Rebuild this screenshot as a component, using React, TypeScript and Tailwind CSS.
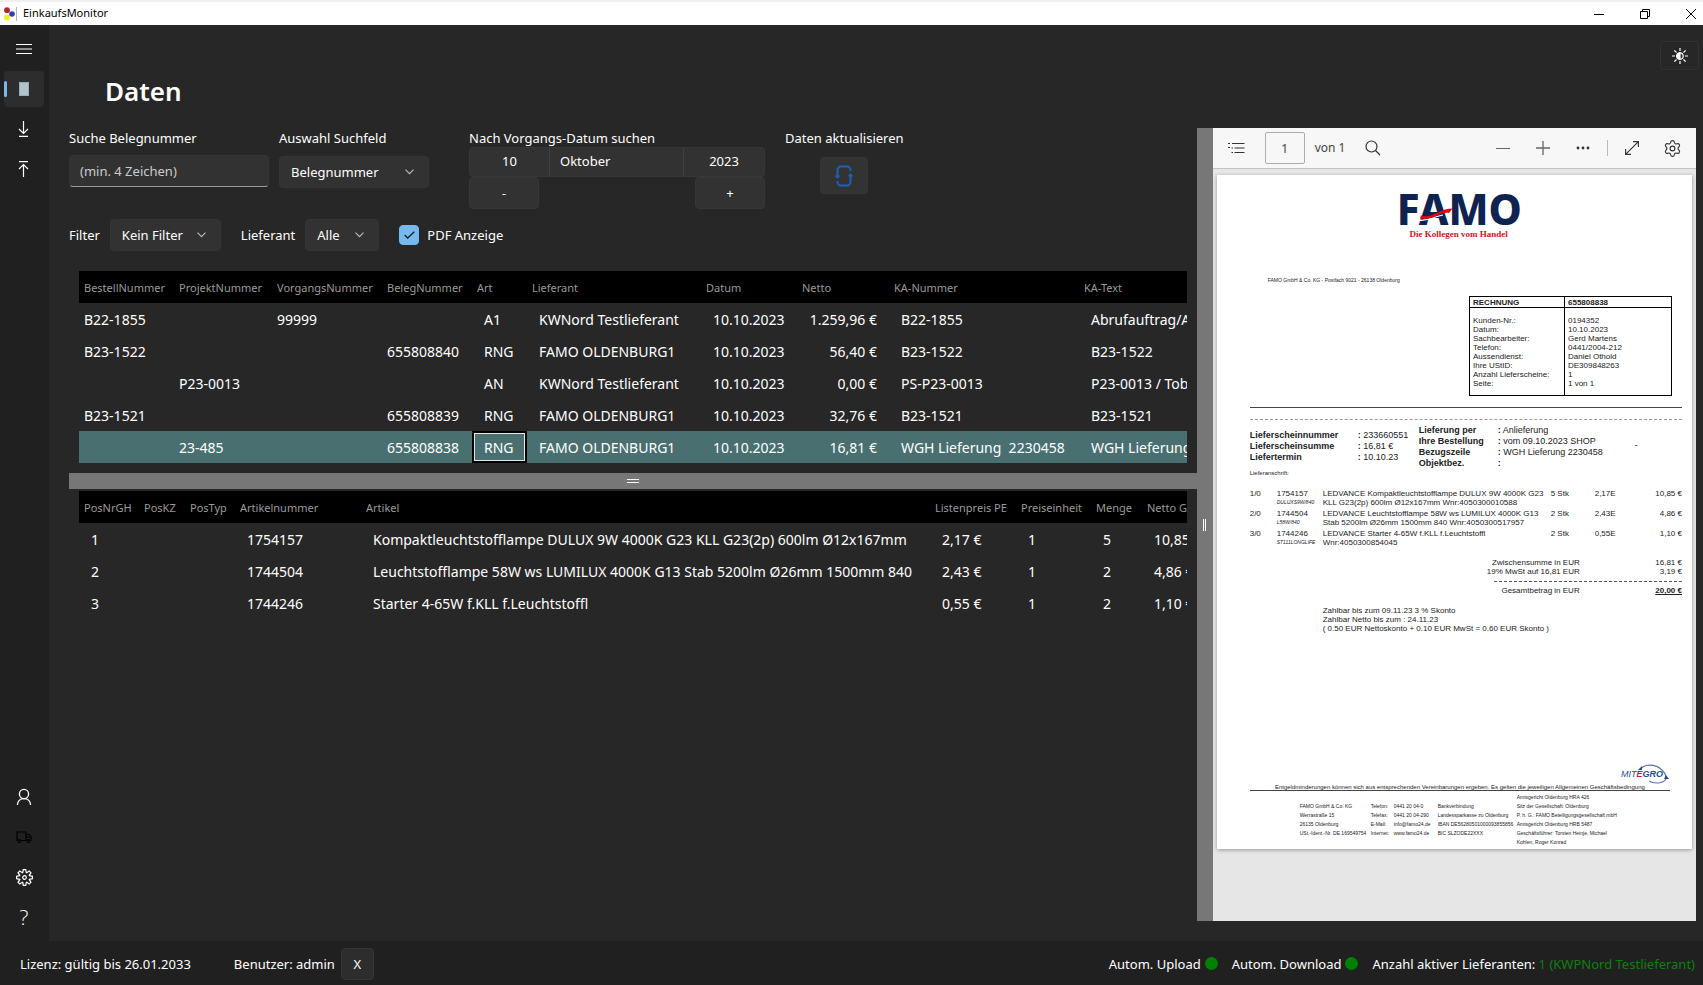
import React, { useState } from 'react';
import { Settings } from 'lucide-react';
import { VscSettingsGear } from 'react-icons/vsc';

interface Order {
  bestell: string;
  projekt: string;
  vorgang: string;
  beleg: string;
  art: string;
  lieferant: string;
  datum: string;
  netto: string;
  kaNummer: string;
  kaText: string;
}

interface Position {
  nr: string;
  artikelnummer: string;
  artikel: string;
  preis: string;
  einheit: string;
  menge: string;
  netto: string;
}

const orders: Order[] = [
  { bestell: 'B22-1855', projekt: '', vorgang: '99999', beleg: '', art: 'A1', lieferant: 'KWNord Testlieferant', datum: '10.10.2023', netto: '1.259,96 €', kaNummer: 'B22-1855', kaText: 'Abrufauftrag/A' },
  { bestell: 'B23-1522', projekt: '', vorgang: '', beleg: '655808840', art: 'RNG', lieferant: 'FAMO OLDENBURG1', datum: '10.10.2023', netto: '56,40 €', kaNummer: 'B23-1522', kaText: 'B23-1522' },
  { bestell: '', projekt: 'P23-0013', vorgang: '', beleg: '', art: 'AN', lieferant: 'KWNord Testlieferant', datum: '10.10.2023', netto: '0,00 €', kaNummer: 'PS-P23-0013', kaText: 'P23-0013 / Tob' },
  { bestell: 'B23-1521', projekt: '', vorgang: '', beleg: '655808839', art: 'RNG', lieferant: 'FAMO OLDENBURG1', datum: '10.10.2023', netto: '32,76 €', kaNummer: 'B23-1521', kaText: 'B23-1521' },
  { bestell: '', projekt: '23-485', vorgang: '', beleg: '655808838', art: 'RNG', lieferant: 'FAMO OLDENBURG1', datum: '10.10.2023', netto: '16,81 €', kaNummer: 'WGH Lieferung  2230458', kaText: 'WGH Lieferung' },
];

const positions: Position[] = [
  { nr: '1', artikelnummer: '1754157', artikel: 'Kompaktleuchtstofflampe DULUX 9W 4000K G23 KLL G23(2p) 600lm Ø12x167mm', preis: '2,17 €', einheit: '1', menge: '5', netto: '10,85 €' },
  { nr: '2', artikelnummer: '1744504', artikel: 'Leuchtstofflampe 58W ws LUMILUX 4000K G13 Stab 5200lm Ø26mm 1500mm 840', preis: '2,43 €', einheit: '1', menge: '2', netto: '4,86 €' },
  { nr: '3', artikelnummer: '1744246', artikel: 'Starter 4-65W f.KLL f.Leuchtstoffl', preis: '0,55 €', einheit: '1', menge: '2', netto: '1,10 €' },
];

const invoiceHead = [
  ['Kunden-Nr.:', '0194352'],
  ['Datum:', '10.10.2023'],
  ['Sachbearbeiter:', 'Gerd Martens'],
  ['Telefon:', '0441/2004-212'],
  ['Aussendienst:', 'Daniel Othold'],
  ['Ihre UStID:', 'DE309848263'],
  ['Anzahl Lieferscheine:', '1'],
  ['Seite:', '1 von 1'],
];

const invoiceLines = [
  { pos: '1/0', nr: '1754157', code: 'DULUXS9W/840', text: ['LEDVANCE Kompaktleuchtstofflampe DULUX 9W 4000K G23', 'KLL G23(2p) 600lm Ø12x167mm Wnr:4050300010588'], qty: '5 Stk', price: '2,17E', sum: '10,85 €' },
  { pos: '2/0', nr: '1744504', code: 'L58W/840', text: ['LEDVANCE Leuchtstofflampe 58W ws LUMILUX 4000K G13', 'Stab 5200lm Ø26mm 1500mm 840 Wnr:4050300517957'], qty: '2 Stk', price: '2,43E', sum: '4,86 €' },
  { pos: '3/0', nr: '1744246', code: 'ST111LONGLIFE', text: ['LEDVANCE Starter 4-65W f.KLL f.Leuchtstoffl', 'Wnr:4050300854045'], qty: '2 Stk', price: '0,55E', sum: '1,10 €' },
];

const imprint = [
  ['', '', '', '', 'Amtsgericht Oldenburg HRA 426'],
  ['FAMO GmbH & Co. KG', 'Telefon:', '0441 20 04-0', 'Bankverbindung', 'Sitz der Gesellschaft: Oldenburg'],
  ['Werrastraße 15', 'Telefax:', '0441 20 04-290', 'Landessparkasse zu Oldenburg', 'P. h. G.: FAMO Beteiligungsgesellschaft mbH'],
  ['26135 Oldenburg', 'E-Mail:', 'info@famo24.de', 'IBAN DE56280501000093855856', 'Amtsgericht Oldenburg HRB 5487'],
  ['USt.-Ident.-Nr. DE 169549754', 'Internet:', 'www.famo24.de', 'BIC SLZODE22XXX', 'Geschäftsführer: Torsten Heinje, Michael'],
  ['', '', '', '', 'Kohlen, Roger Konrad'],
];

function TitleBar() {
  return (
    <header className="flex h-[25px] shrink-0 items-center justify-between border-t-2 border-[#f0f0f0] bg-white text-black">
      <div className="flex items-center gap-[6px] pl-1">
        <svg width="13" height="14" viewBox="0 0 13 14">
          <circle cx="3" cy="3.2" r="2.9" fill="#b3262c" />
          <circle cx="3" cy="10.6" r="3" fill="#eef02a" />
          <circle cx="8" cy="7" r="2.8" fill="#2b3fb0" />
          <path d="M12.5 0v14" stroke="#a9b4d0" />
        </svg>
        <span className="pb-px text-[11px]">EinkaufsMonitor</span>
      </div>
      <div className="flex gap-[22px]">
        <button aria-label="Minimieren" className="flex h-6 w-6 items-center justify-center">
          <svg width="10" height="10" viewBox="0 0 10 10"><path d="M0 5.5h10" stroke="#000" /></svg>
        </button>
        <button aria-label="Verkleinern" className="flex h-6 w-6 items-center justify-center">
          <svg width="10" height="10" viewBox="0 0 10 10" fill="none" stroke="#000"><path d="M.5 2.5h7v7h-7zM2.5 2.5v-2h7v7h-2" /></svg>
        </button>
        <button aria-label="Schließen" className="flex h-6 w-6 items-center justify-center">
          <svg width="10" height="10" viewBox="0 0 10 10" stroke="#000"><path d="M0 0l10 10M10 0L0 10" /></svg>
        </button>
      </div>
    </header>
  );
}

function NavItem({ label, active, children }: { label: string; active?: boolean; children: React.ReactNode }) {
  return (
    <button
      aria-label={label}
      className={`relative flex h-9 w-10 items-center justify-center rounded-[4px] ${active ? 'bg-[#2d2d2d]' : 'hover:bg-[#2d2d2d]'}`}
    >
      {active && <span className="absolute left-0 h-4 w-[3px] rounded-full bg-[#76b9ed]" />}
      {children}
    </button>
  );
}

function Sidebar() {
  return (
    <nav className="flex w-[49px] shrink-0 flex-col justify-between bg-[#202020] px-1 py-[6px]">
      <div className="flex flex-col gap-1">
        <NavItem label="Menü">
          <svg width="16" height="12" viewBox="0 0 16 12" stroke="#fff"><path d="M0 1.5h16M0 6h16M0 10.5h16" /></svg>
        </NavItem>
        <NavItem label="Daten" active>
          <svg width="10" height="14" viewBox="0 0 10 14"><rect x=".5" y=".5" width="9" height="13" fill="#b4c3ca" stroke="#8fb0c0" /></svg>
        </NavItem>
        <NavItem label="Download">
          <svg width="12" height="16" viewBox="0 0 12 16" fill="none" stroke="#fff" strokeWidth="1.2"><path d="M5.5 0v12.5M1 8l4.5 4.5L10 8M1 15.4h9" /></svg>
        </NavItem>
        <NavItem label="Upload">
          <svg width="12" height="16" viewBox="0 0 12 16" fill="none" stroke="#fff" strokeWidth="1.2"><path d="M5.5 16V3.5M1 8l4.5-4.5L10 8M1 .6h9" /></svg>
        </NavItem>
      </div>
      <div className="flex flex-col gap-1">
        <NavItem label="Benutzer">
          <svg width="16" height="18" viewBox="0 0 16 18" fill="none" stroke="#fff" strokeWidth="1.3"><circle cx="8" cy="6" r="4.6" /><path d="M1.4 17c.2-4 3-6.4 6.6-6.4s6.4 2.4 6.6 6.4" /></svg>
        </NavItem>
        <NavItem label="Lieferanten">
          <svg width="16" height="12" viewBox="0 0 16 12" fill="none" stroke="#000" strokeWidth="1.2"><path d="M2 9.5H1V1h9v8.5H5M10 3.5h3.5L15 6v3.5h-1M10 9.5h1M10 6h5" /><circle cx="3.5" cy="10" r="1.4" /><circle cx="12.5" cy="10" r="1.4" /></svg>
        </NavItem>
        <NavItem label="Einstellungen">
          <VscSettingsGear size={17} color="#fff" />
        </NavItem>
        <NavItem label="Hilfe">
          <span className="font-['Open_Sans',sans-serif] text-[21px] font-light leading-6 text-white">?</span>
        </NavItem>
      </div>
    </nav>
  );
}

function Dropdown({ id, value, width }: { id: string; value: string; width: string }) {
  return (
    <div className={`relative flex h-8 items-center ${width}`}>
      <select
        id={id}
        className="h-full w-full appearance-none rounded-[4px] border border-[#353535] bg-[#323232] pl-[11px] text-[13px] text-white outline-none"
      >
        <option>{value}</option>
      </select>
      <svg className="pointer-events-none absolute right-[15px]" width="9" height="6" viewBox="0 0 9 6" fill="none" stroke="#bbb" strokeWidth="1.1"><path d="M.5.7l4 4 4-4" /></svg>
    </div>
  );
}

function SearchBar() {
  const label = 'pt-px leading-[18px]';
  const button = 'h-8 w-[70px] rounded-[4px] border border-[#373737] bg-[#323232] text-[13px]';
  return (
    <div className="flex items-start">
      <div className="mr-[10px] flex w-[200px] flex-col gap-2">
        <label htmlFor="suche" className={label}>Suche Belegnummer</label>
        <input
          id="suche"
          type="text"
          placeholder="(min. 4 Zeichen)"
          className="h-8 w-full rounded-[4px] border border-[#353535] border-b-[#9a9a9a] bg-[#323232] px-[10px] text-[13px] outline-none placeholder:text-[#cccccc]"
        />
      </div>
      <div className="mr-10 flex w-[150px] flex-col gap-[9px]">
        <label htmlFor="suchfeld" className={label}>Auswahl Suchfeld</label>
        <Dropdown id="suchfeld" value="Belegnummer" width="w-[150px]" />
      </div>
      <div className="mr-5 w-[296px]">
        <div id="datum" className={label}>Nach Vorgangs-Datum suchen</div>
        <div role="group" aria-labelledby="datum" className="flex h-[30px] rounded-[4px] border border-[#373737] bg-[#323232]">
          <button className="w-[80px] border-r border-[#404040] pb-[2px]">10</button>
          <button className="flex-1 border-r border-[#404040] pb-[2px] pl-[10px] text-left">Oktober</button>
          <button className="w-[80px] pb-[2px]">2023</button>
        </div>
        <div className="flex justify-between">
          <button className={button}>-</button>
          <button className={button}>+</button>
        </div>
      </div>
      <div className="flex flex-col items-center gap-[10px]">
        <span id="aktualisieren" className={label}>Daten aktualisieren</span>
        <button aria-labelledby="aktualisieren" className="flex h-[37px] w-12 items-center justify-center rounded-[4px] border border-[#353535] bg-[#333333]">
          <svg width="20" height="22" viewBox="0 0 20 22" fill="none" stroke="#1b62b5" strokeWidth="2">
            <path d="M16.5 6V5A3.500 3.500 0 0 0 13 1.500H7A3.500 3.500 0 0 0 3.500 5v7" />
            <path d="M3.500 16v1A3.500 3.500 0 0 0 7 20.500h6a3.500 3.500 0 0 0 3.500-3.500v-7" />
            <path d="M.5 10.500h6l-3 3.500zM13.500 11.500h6l-3-3.500z" fill="#1b62b5" stroke="none" />
          </svg>
        </button>
      </div>
    </div>
  );
}

function FilterBar() {
  const [showPdf, setShowPdf] = useState(true);
  return (
    <div className="mt-[10px] flex items-center">
      <label htmlFor="filter" className="mr-[10px]">Filter</label>
      <Dropdown id="filter" value="Kein Filter" width="w-[111px]" />
      <label htmlFor="lieferant" className="ml-5 mr-[10px]">Lieferant</label>
      <Dropdown id="lieferant" value="Alle" width="w-[74px]" />
      <label className="relative ml-5 flex items-center gap-2">
        <input
          type="checkbox"
          checked={showPdf}
          onChange={(e) => setShowPdf(e.target.checked)}
          className="peer h-5 w-5 appearance-none rounded-[4px] border border-[#76b9ed] checked:bg-[#76b9ed]"
        />
        <svg className="pointer-events-none absolute left-[5px] hidden peer-checked:block" width="11" height="8" viewBox="0 0 11 8" fill="none" stroke="#10202c" strokeWidth="1.3"><path d="M.7 4l3 3L10.3.7" /></svg>
        PDF Anzeige
      </label>
    </div>
  );
}

const tableClass = 'w-[1200px] table-fixed border-collapse whitespace-pre [&_td]:pt-[2px] [&_th]:pt-[2px]';
const headCell = 'pl-[5px] text-left font-normal';

function OrderTable() {
  return (
    <div className="overflow-hidden">
      <table className={tableClass}>
        <colgroup>
          <col className="w-[95px]" />
          <col className="w-[98px]" />
          <col className="w-[110px]" />
          <col className="w-[90px]" />
          <col className="w-[55px]" />
          <col className="w-[174px]" />
          <col className="w-[96px]" />
          <col className="w-[92px]" />
          <col className="w-[190px]" />
          <col />
        </colgroup>
        <thead>
          <tr className="h-8 bg-black text-[11px] text-[#9a9a9a]">
            <th className={headCell}>BestellNummer</th>
            <th className={headCell}>ProjektNummer</th>
            <th className={headCell}>VorgangsNummer</th>
            <th className={headCell}>BelegNummer</th>
            <th className={headCell}>Art</th>
            <th className={headCell}>Lieferant</th>
            <th className={headCell}>Datum</th>
            <th className={headCell}>Netto</th>
            <th className={headCell}>KA-Nummer</th>
            <th className={headCell}>KA-Text</th>
          </tr>
        </thead>
        <tbody>
          {orders.map((o, i) => {
            const selected = i === orders.length - 1;
            return (
              <tr key={i} className={`h-8 ${selected ? 'bg-[#4a6f70]' : ''}`}>
                <td className="pl-[5px]">{o.bestell}</td>
                <td className="pl-[5px]">{o.projekt}</td>
                <td className="pl-[5px]">{o.vorgang}</td>
                <td className="pl-[5px]">{o.beleg}</td>
                <td className={`pl-3 ${selected ? 'outline-2 -outline-offset-2 outline-black inset-ring-3 inset-ring-white/85' : ''}`}>{o.art}</td>
                <td className="pl-3">{o.lieferant}</td>
                <td className="pl-3">{o.datum}</td>
                <td className="pr-3 text-right">{o.netto}</td>
                <td className="pl-3">{o.kaNummer}</td>
                <td className="pl-3">{o.kaText}</td>
              </tr>
            );
          })}
        </tbody>
      </table>
    </div>
  );
}

function PositionTable() {
  return (
    <div className="overflow-hidden">
      <table className={tableClass}>
        <colgroup>
          <col className="w-[60px]" />
          <col className="w-[46px]" />
          <col className="w-[50px]" />
          <col className="w-[126px]" />
          <col className="w-[569px]" />
          <col className="w-[86px]" />
          <col className="w-[75px]" />
          <col className="w-[51px]" />
          <col />
        </colgroup>
        <thead>
          <tr className="h-8 bg-black text-[11px] text-[#9a9a9a]">
            <th className={headCell}>PosNrGH</th>
            <th className={headCell}>PosKZ</th>
            <th className={headCell}>PosTyp</th>
            <th className={headCell}>Artikelnummer</th>
            <th className={headCell}>Artikel</th>
            <th className={headCell}>Listenpreis PE</th>
            <th className={headCell}>Preiseinheit</th>
            <th className={headCell}>Menge</th>
            <th className={headCell}>Netto GH</th>
          </tr>
        </thead>
        <tbody>
          {positions.map((p) => (
            <tr key={p.nr} className="h-8">
              <td className="pl-3">{p.nr}</td>
              <td />
              <td />
              <td className="pl-3">{p.artikelnummer}</td>
              <td className="pl-3">{p.artikel}</td>
              <td className="pl-3">{p.preis}</td>
              <td className="pl-3">{p.einheit}</td>
              <td className="pl-3">{p.menge}</td>
              <td className="pl-3">{p.netto}</td>
            </tr>
          ))}
        </tbody>
      </table>
    </div>
  );
}

function PdfToolbar() {
  const tool = 'flex h-8 w-10 items-center justify-center';
  return (
    <div className="flex h-10 shrink-0 items-center justify-between px-1 text-[#444]">
      <div className="flex items-center">
        <button aria-label="Inhalt" className="mr-2 flex h-8 w-10 items-center justify-center">
          <svg width="17" height="12" viewBox="0 0 17 12" stroke="#333" strokeWidth="1.2"><path d="M4 1.5h12.5M6.5 6h10M6.5 10.5h10M0 1.5h2M0 5.5h2M3.5 6h1.5M3.5 10.5h1.5" /></svg>
        </button>
        <input aria-label="Seite" defaultValue="1" className="h-8 w-10 rounded-[2px] border border-[#adadad] bg-[#f7f7f7] text-center text-[12px]" />
        <span className="mr-2 ml-[10px] text-[12px]">von 1</span>
        <button aria-label="Suchen" className={tool}>
          <svg width="16" height="16" viewBox="0 0 16 16" fill="none" stroke="#333" strokeWidth="1.2"><circle cx="6.5" cy="6.5" r="5.5" /><path d="M10.5 10.5L15 15" /></svg>
        </button>
      </div>
      <div className="flex items-center">
        <button aria-label="Verkleinern" className={tool}>
          <svg width="14" height="14" viewBox="0 0 14 14" stroke="#666"><path d="M0 7.5h14" /></svg>
        </button>
        <button aria-label="Vergrößern" className={tool}>
          <svg width="14" height="14" viewBox="0 0 14 14" stroke="#666" strokeWidth="1.3"><path d="M0 7h14M7 0v14" /></svg>
        </button>
        <button aria-label="Mehr" className={tool}>
          <svg width="14" height="4" viewBox="0 0 14 4" fill="#333"><circle cx="2" cy="2" r="1.4" /><circle cx="7" cy="2" r="1.4" /><circle cx="12" cy="2" r="1.4" /></svg>
        </button>
        <span className="mx-1 h-4 w-px bg-[#bbb]" />
        <button aria-label="Vollbild" className={tool}>
          <svg width="14" height="14" viewBox="0 0 14 14" fill="none" stroke="#333" strokeWidth="1.1"><path d="M.6 13.4L13.4.6M8 .6h5.4V6M.6 8v5.4H6" /></svg>
        </button>
        <button aria-label="PDF Einstellungen" className={tool}>
          <Settings size={19} strokeWidth={1.4} color="#333" />
        </button>
      </div>
    </div>
  );
}

function FamoLogo() {
  return (
    <div className="ml-[147px] w-[124px] text-center">
      <div className="relative font-['Noto_Sans',sans-serif] text-[42px] font-extrabold leading-[42px] text-[#0f2350]">
        FAMO
        <svg className="absolute left-[22px] top-[19px]" width="36" height="14" viewBox="0 0 36 14">
          <path d="M0 13.5c9 0 12-2 18-4l6-1.500" fill="none" stroke="#fff" strokeWidth="1.2" />
          <path d="M2 8.500c7 2 11-.5 17-3C24 3 28 1.500 34 1.500c-2 1.300-2.500 3-4 4.500-6-1-10 2-15 4-5 1.800-9 2.500-14 1.500z" fill="#e30613" />
        </svg>
      </div>
      <div className="font-['Liberation_Serif',serif] text-[9px] font-bold leading-[9px] text-[#d8151c]">Die Kollegen vom Handel</div>
    </div>
  );
}

function MitegroLogo() {
  return (
    <div className="relative flex h-5 w-[49px] items-center text-[9px] font-bold italic leading-5 text-[#1d4f91]">
      <svg className="absolute right-0 top-0" width="32" height="20" viewBox="0 0 32 20" fill="none" stroke="#5d74b5" strokeWidth="1.1">
        <path d="M2 6C5 0 17-1 24 6c3 3 4 5 4 8M28 15c-3 5-12 5-17 2" />
        <path d="M26 15h5l-3-4zM0 6h4L4 2z" fill="#2c4a9a" stroke="none" />
      </svg>
      <span className="relative font-normal">MIT</span>
      <span className="relative text-[#d8151c]">E</span>
      <span className="relative">GRO</span>
    </div>
  );
}

function Invoice() {
  return (
    <article className="flex aspect-[475/674] flex-col bg-white pt-[13px] pr-[10px] pb-[2px] pl-[33px] font-['Liberation_Sans',Arial,sans-serif] text-[8px] leading-[9px] text-[#222] shadow-[0_1px_4px_rgba(0,0,0,0.35)]">
      <FamoLogo />
      <p className="mt-[37px] ml-[18px] text-[5px]">FAMO GmbH &amp; Co. KG - Postfach 9021 - 26138 Oldenburg</p>
      <table className="mt-[11px] mr-[10px] w-[203px] self-end border-collapse border border-black">
        <thead>
          <tr className="h-[11px] border-b border-black text-left">
            <th className="w-[95px] border-r border-black pl-[3px]">RECHNUNG</th>
            <th className="pl-[3px]">655808838</th>
          </tr>
        </thead>
        <tbody>
          {invoiceHead.map(([label, value], i) => (
            <tr key={label}>
              <td className={`border-r border-black pl-[3px] ${i === 0 ? 'pt-2' : ''} ${i === 7 ? 'pb-[7px]' : ''}`}>{label}</td>
              <td className={`pl-[3px] ${i === 0 ? 'pt-2' : ''} ${i === 7 ? 'pb-[7px]' : ''}`}>{value}</td>
            </tr>
          ))}
        </tbody>
      </table>
      <hr className="mt-[11px] border-[#444]" />
      <hr className="mt-[11px] border-dashed border-[#999]" />
      <div className="mt-[5px] flex text-[9px] leading-[11px]">
        <dl className="mt-[5px] grid w-[169px] grid-cols-[108px_auto] content-start">
          <dt className="font-bold">Lieferscheinnummer</dt>
          <dd><b>:</b> 233660551</dd>
          <dt className="font-bold">Lieferscheinsumme</dt>
          <dd><b>:</b> 16,81 €</dd>
          <dt className="font-bold">Liefertermin</dt>
          <dd><b>:</b> 10.10.23</dd>
        </dl>
        <dl className="grid grid-cols-[79px_auto] content-start">
          <dt className="font-bold">Lieferung per</dt>
          <dd><b>:</b> Anlieferung</dd>
          <dt className="font-bold">Ihre Bestellung</dt>
          <dd><b>:</b> vom 09.10.2023 SHOP</dd>
          <dt className="font-bold">Bezugszeile</dt>
          <dd><b>:</b> WGH Lieferung 2230458</dd>
          <dt className="font-bold">Objektbez.</dt>
          <dd><b>:</b></dd>
        </dl>
        <span className="mt-[15px] ml-8">-</span>
      </div>
      <p className="text-[6px]">Lieferanschrift:</p>
      <table className="mt-[11px] w-full table-fixed">
        <colgroup>
          <col className="w-[27px]" />
          <col className="w-[46px]" />
          <col className="w-[228px]" />
          <col className="w-[44px]" />
          <col className="w-[36px]" />
          <col />
        </colgroup>
        <tbody className="align-top">
          {invoiceLines.map((l) => (
            <tr key={l.pos} className="h-5 whitespace-nowrap">
              <td>{l.pos}</td>
              <td>
                {l.nr}
                <div className="text-[5px] italic">{l.code}</div>
              </td>
              <td>
                {l.text[0]}
                <br />
                {l.text[1]}
              </td>
              <td>{l.qty}</td>
              <td>{l.price}</td>
              <td className="text-right">{l.sum}</td>
            </tr>
          ))}
        </tbody>
      </table>
      <dl className="mt-[9px] grid grid-cols-[330px_auto] text-right">
        <dt>Zwischensumme in EUR</dt>
        <dd>16,81 €</dd>
        <dt>19% MwSt auf 16,81 EUR</dt>
        <dd>3,19 €</dd>
        <dt className="col-span-2 mt-[5px] ml-[244px] border-t border-dashed border-[#555]" />
        <dt className="mt-1">Gesamtbetrag in EUR</dt>
        <dd className="mt-1 font-bold underline">20,00 €</dd>
      </dl>
      <p className="mt-[11px] ml-[73px]">
        Zahlbar bis zum 09.11.23 3 % Skonto
        <br />
        Zahlbar Netto bis zum : 24.11.23
        <br />
        ( 0.50 EUR Nettoskonto + 0.10 EUR MwSt = 0.60 EUR Skonto )
      </p>
      <footer className="mt-auto mr-3">
        <div className="flex justify-end">
          <MitegroLogo />
        </div>
        <p className="mb-[2px] border-b border-[#444] text-center text-[6px] leading-[6px]">
          Entgeldminderungen können sich aus entsprechenden Vereinbarungen ergeben. Es gelten die jeweiligen Allgemeinen Geschäftsbedingung
        </p>
        <table className="ml-[50px] w-[370px] table-fixed text-[5px]">
          <colgroup>
            <col className="w-[71px]" />
            <col className="w-[23px]" />
            <col className="w-[44px]" />
            <col className="w-[79px]" />
            <col />
          </colgroup>
          <tbody>
            {imprint.map((row, i) => (
              <tr key={i} className="whitespace-nowrap">
                {row.map((cell, j) => (
                  <td key={j}>{cell}</td>
                ))}
              </tr>
            ))}
          </tbody>
        </table>
      </footer>
    </article>
  );
}

function StatusBar() {
  return (
    <footer className="flex h-11 shrink-0 items-center justify-between bg-[#202020] pt-px pr-2 pl-5">
      <div className="flex items-center">
        <span className="mr-[43px]">Lizenz: gültig bis 26.01.2033</span>
        <span className="mr-[6px]">Benutzer: admin</span>
        <button className="h-8 w-[33px] rounded-[4px] border border-[#353535] bg-[#2d2d2d]">X</button>
      </div>
      <div className="flex items-center">
        <span>Autom. Upload</span>
        <span className="mr-[14px] ml-1 h-[13px] w-[13px] rounded-full bg-[#008000]" />
        <span>Autom. Download</span>
        <span className="mr-[14px] ml-1 h-[13px] w-[13px] rounded-full bg-[#008000]" />
        <span>
          Anzahl aktiver Lieferanten: <span className="text-[#0b800b]">1 (KWPNord Testlieferant)</span>
        </span>
      </div>
    </footer>
  );
}

export default function App() {
  return (
    <div className="flex min-h-screen flex-col bg-[#272727] font-['Noto_Sans',sans-serif] text-[13px] leading-5 text-white">
      <TitleBar />
      <div className="flex flex-1">
        <Sidebar />
        <main className="flex min-w-0 flex-1 flex-col pb-5 pl-5">
          <div className="flex h-[103px] shrink-0 justify-between pr-1">
            <h1 className="mt-12 ml-9 text-[26px] font-semibold leading-9">Daten</h1>
            <button aria-label="Design wechseln" className="mt-4 flex h-[29px] w-[39px] items-center justify-center rounded-[4px] border border-[#323232]">
              <svg width="16" height="16" viewBox="0 0 16 16" stroke="#fff" strokeWidth="1.2" fill="none">
                <circle cx="8" cy="8" r="3.2" />
                <path d="M8 4.8a3.2 3.2 0 0 0 0 6.4z" fill="#fff" />
                <path d="M8 0v3M8 13v3M0 8h3M13 8h3M2.3 2.3l2.2 2.2M11.5 11.5l2.2 2.2M2.3 13.7l2.2-2.2M11.5 4.5l2.2-2.2" />
              </svg>
            </button>
          </div>
          <div className="grid flex-1 grid-cols-[minmax(0,7fr)_16px_minmax(0,3fr)] pr-[7px]">
            <section className="min-w-0">
              <SearchBar />
              <FilterBar />
              <div className="mt-5 mr-[10px] ml-[10px] text-[14px]">
                <OrderTable />
              </div>
              <div className="mt-[10px] mb-[2px] flex h-4 flex-col items-center justify-center gap-[2px] bg-[#777777]">
                <span className="h-px w-3 bg-white" />
                <span className="h-px w-3 bg-white" />
              </div>
              <div className="mr-[10px] ml-[10px] text-[14px]">
                <PositionTable />
              </div>
            </section>
            <div className="flex items-center justify-center gap-px bg-[#777777]">
              <span className="h-3 w-px bg-white" />
              <span className="h-3 w-px bg-white" />
            </div>
            <section className="flex flex-col bg-[#f7f7f7]">
              <PdfToolbar />
              <div className="flex-1 border-t border-[#c4c4c4] bg-[#e6e6e6] px-1 pt-[6px]">
                <Invoice />
              </div>
            </section>
          </div>
        </main>
      </div>
      <StatusBar />
    </div>
  );
}
